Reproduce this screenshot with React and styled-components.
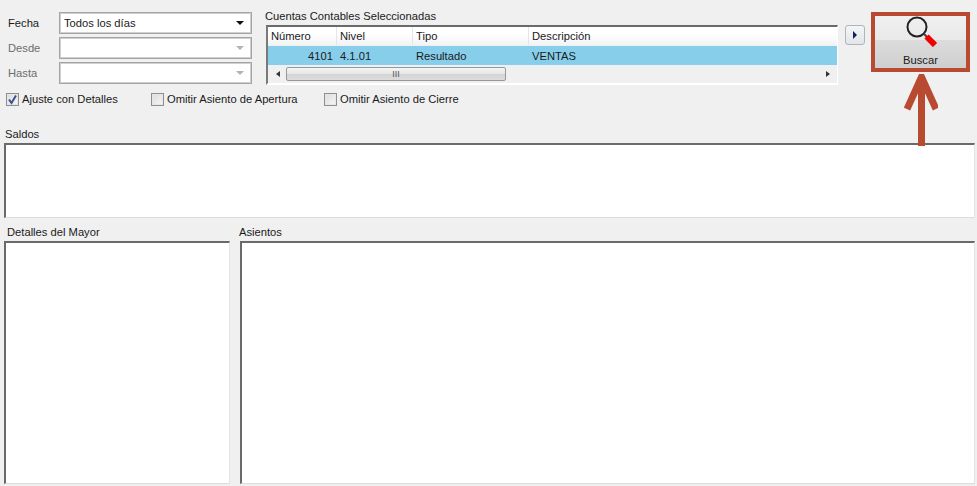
import React from 'react';
import styled, { createGlobalStyle } from 'styled-components';

const GlobalStyle = createGlobalStyle`
    html, body {
        margin: 0;
        padding: 0;
        background: #f0f0f0;
    }
`;

const Page = styled.div`
    position: relative;
    width: 977px;
    height: 486px;
    overflow: hidden;
    box-sizing: border-box;
    padding: 12px 2px 0 4px;
    background: #f0f0f0;
    color: #1a1a1a;
    font-family: "Liberation Sans", Arial, sans-serif;
    font-size: 11.2px;
    line-height: 14px;
`;

const TopRow = styled.div`
    display: flex;
    align-items: flex-start;
    height: 73px;
`;

const FilterForm = styled.div`
    display: flex;
    flex-direction: column;
    gap: 3px;
    width: 248px;
    padding-left: 4px;
    box-sizing: border-box;
`;

const FilterRow = styled.div`
    display: grid;
    grid-template-columns: 51px 193px;
    align-items: center;
    color: ${(p) => (p.$disabled ? '#6d6d6d' : '#1a1a1a')};
`;

const Combo = styled.div`
    display: flex;
    align-items: center;
    justify-content: space-between;
    box-sizing: border-box;
    height: 22px;
    padding: 0 7px 0 4px;
    background: #fff;
    border: 1px solid #a4a4a4;
    outline: 1px solid #d0d0d0;
    outline-offset: -2px;
`;

const ComboArrow = styled.span`
    width: 0;
    height: 0;
    border-left: 4px solid transparent;
    border-right: 4px solid transparent;
    border-top: 4px solid ${(p) => (p.$disabled ? '#b4b4b4' : '#111')};
`;

const AccountsPanel = styled.div`
    width: 572px;
    margin-left: 14px;
    margin-top: -3px;
`;

const PanelLabel = styled.div`
    height: 16px;
    margin-left: -1px;
`;

const AccountsTable = styled.div`
    box-sizing: border-box;
    width: 572px;
    height: 60px;
    background: #f0f0f0;
    border-top: 2px solid #6a6a6a;
    border-left: 2px solid #7a7a7a;
    border-right: 1px solid #fff;
    border-bottom: 2px solid #fff;
`;

const TableRow = styled.div`
    display: grid;
    grid-template-columns: 69px 76px 116px 1fr;
    height: ${(p) => p.$height}px;
    align-items: center;
    background: ${(p) => p.$bg};
    margin-bottom: ${(p) => p.$gap || 0}px;
`;

const HeadCell = styled.div`
    height: 100%;
    display: flex;
    align-items: center;
    padding-left: 3px;
    box-sizing: border-box;
    border-right: 1px solid #e3e5ea;
    &:last-child { border-right: 0; }
`;

const Cell = styled.div`
    padding: 0 4px 0 3px;
    text-align: ${(p) => (p.$right ? 'right' : 'left')};
`;

const ScrollBar = styled.div`
    display: flex;
    align-items: center;
    height: 15px;
    padding-left: 8px;
    padding-right: 7px;
    justify-content: space-between;
`;

const ScrollArrow = styled.span`
    width: 0;
    height: 0;
    border-top: 3px solid transparent;
    border-bottom: 3px solid transparent;
    ${(p) => (p.$right ? 'border-left: 4px solid #333;' : 'border-right: 4px solid #333;')}
`;

const ScrollThumb = styled.div`
    display: flex;
    align-items: center;
    justify-content: center;
    box-sizing: border-box;
    width: 220px;
    height: 14px;
    margin-left: 6px;
    margin-right: auto;
    border: 1px solid #979797;
    border-radius: 2px;
    background: linear-gradient(#f4f4f4, #e6e6e6 50%, #d4d4d4 50%, #dcdcdc);
    color: #555;
    font-size: 9px;
`;

const NextButton = styled.button`
    display: flex;
    align-items: center;
    justify-content: center;
    width: 20px;
    height: 20px;
    margin: 13px 0 0 7px;
    padding: 0;
    border: 1px solid #b0b4bc;
    border-radius: 3px;
    background: linear-gradient(#f4f5f8, #e4e5ea);
`;

const NextArrow = styled.span`
    width: 0;
    height: 0;
    border-top: 4px solid transparent;
    border-bottom: 4px solid transparent;
    border-left: 4px solid #14205a;
`;

const SearchButton = styled.button`
    display: flex;
    flex-direction: column;
    align-items: center;
    justify-content: space-between;
    box-sizing: border-box;
    width: 99px;
    height: 60px;
    margin-left: 6px;
    padding: 0 0 1px;
    border: 4px solid #b94a32;
    background: linear-gradient(#f0f0f0, #e9e9e9 46%, #dcdcdc 46%, #cfcfcf);
    color: #1a1a1a;
    font-family: inherit;
    font-size: inherit;
    line-height: 14px;
`;

const OptionsRow = styled.div`
    display: flex;
    height: 14px;
    margin-top: 7px;
    padding-left: 2px;
`;

const Option = styled.label`
    display: flex;
    align-items: center;
    gap: 3px;
    width: ${(p) => p.$width}px;
`;

const CheckBox = styled.span`
    display: flex;
    align-items: center;
    justify-content: center;
    box-sizing: border-box;
    width: 13px;
    height: 13px;
    border: 1px solid #8e8f8f;
    background: linear-gradient(135deg, #dcdcdc, #f6f6f6);
    box-shadow: inset 0 0 0 1px #e6e6e6;
`;

const Section = styled.section`
    display: flex;
    flex-direction: column;
    flex: ${(p) => (p.$grow ? '1' : 'none')};
    width: ${(p) => (p.$width ? `${p.$width}px` : 'auto')};
`;

const SectionLabel = styled.div`
    height: 13px;
    line-height: 12px;
    margin-bottom: 2px;
    margin-left: ${(p) => p.$indent || 0}px;
`;

const ListBox = styled.div`
    box-sizing: border-box;
    height: ${(p) => p.$height}px;
    background: #fff;
    border-top: 2px solid #6a6a6a;
    border-left: 2px solid #6a6a6a;
    border-right: 1px solid #e4e4e4;
    border-bottom: 1px solid #dcdcdc;
`;

const SaldosSection = styled(Section)`
    margin-top: 22px;
`;

const BottomRow = styled.div`
    display: flex;
    gap: 10px;
    margin-top: 8px;
`;

const Pointer = styled.svg`
    position: absolute;
    left: 904px;
    top: 74px;
`;

const columns = ['Número', 'Nivel', 'Tipo', 'Descripción'];

const SearchIcon = () => (
    <svg width="34" height="31" viewBox="0 0 34 31">
        <circle cx="13" cy="11" r="9.5" fill="none" stroke="#222" strokeWidth="2" />
        <path d="M20 18 L23 21" stroke="#444" strokeWidth="2" />
        <path d="M22.5 20.5 L31 29" stroke="#f00000" strokeWidth="6" />
    </svg>
);

const Check = () => (
    <svg width="11" height="11" viewBox="0 0 11 11">
        <path d="M2 5.5 L4.5 9 L9 1.5" fill="none" stroke="#3d4f8f" strokeWidth="2" />
    </svg>
);

const App = () => {
    return (
        <Page>
            <GlobalStyle />
            <TopRow>
                <FilterForm>
                    <FilterRow>
                        <span>Fecha</span>
                        <Combo>Todos los días<ComboArrow /></Combo>
                    </FilterRow>
                    <FilterRow $disabled>
                        <span>Desde</span>
                        <Combo><span /><ComboArrow $disabled /></Combo>
                    </FilterRow>
                    <FilterRow $disabled>
                        <span>Hasta</span>
                        <Combo><span /><ComboArrow $disabled /></Combo>
                    </FilterRow>
                </FilterForm>
                <AccountsPanel>
                    <PanelLabel>Cuentas Contables Seleccionadas</PanelLabel>
                    <AccountsTable>
                        <TableRow $height={18} $bg="linear-gradient(#fff, #fff 40%, #f2f3f6)" $gap={1}>
                            {columns.map((c) => <HeadCell key={c}>{c}</HeadCell>)}
                        </TableRow>
                        <TableRow $height={19} $bg="#87ceeb" $gap={1}>
                            <Cell $right>4101</Cell>
                            <Cell>4.1.01</Cell>
                            <Cell>Resultado</Cell>
                            <Cell>VENTAS</Cell>
                        </TableRow>
                        <ScrollBar>
                            <ScrollArrow />
                            <ScrollThumb>III</ScrollThumb>
                            <ScrollArrow $right />
                        </ScrollBar>
                    </AccountsTable>
                </AccountsPanel>
                <NextButton aria-label="Agregar"><NextArrow /></NextButton>
                <SearchButton>
                    <SearchIcon />
                    Buscar
                </SearchButton>
            </TopRow>
            <OptionsRow>
                <Option $width={145}><CheckBox><Check /></CheckBox>Ajuste con Detalles</Option>
                <Option $width={173}><CheckBox />Omitir Asiento de Apertura</Option>
                <Option><CheckBox />Omitir Asiento de Cierre</Option>
            </OptionsRow>
            <SaldosSection>
                <SectionLabel $indent={1}>Saldos</SectionLabel>
                <ListBox $height={75} />
            </SaldosSection>
            <BottomRow>
                <Section $width={226}>
                    <SectionLabel $indent={3}>Detalles del Mayor</SectionLabel>
                    <ListBox $height={243} />
                </Section>
                <Section $grow>
                    <SectionLabel $indent={-1}>Asientos</SectionLabel>
                    <ListBox $height={243} />
                </Section>
            </BottomRow>
            <Pointer width="34" height="73" viewBox="0 0 34 73">
                <path d="M17.5 72 V3 M3 35 L17.5 3 L32 35" fill="none" stroke="#b94a32" strokeWidth="7" strokeLinejoin="miter" />
            </Pointer>
        </Page>
    );
};

export default App;
